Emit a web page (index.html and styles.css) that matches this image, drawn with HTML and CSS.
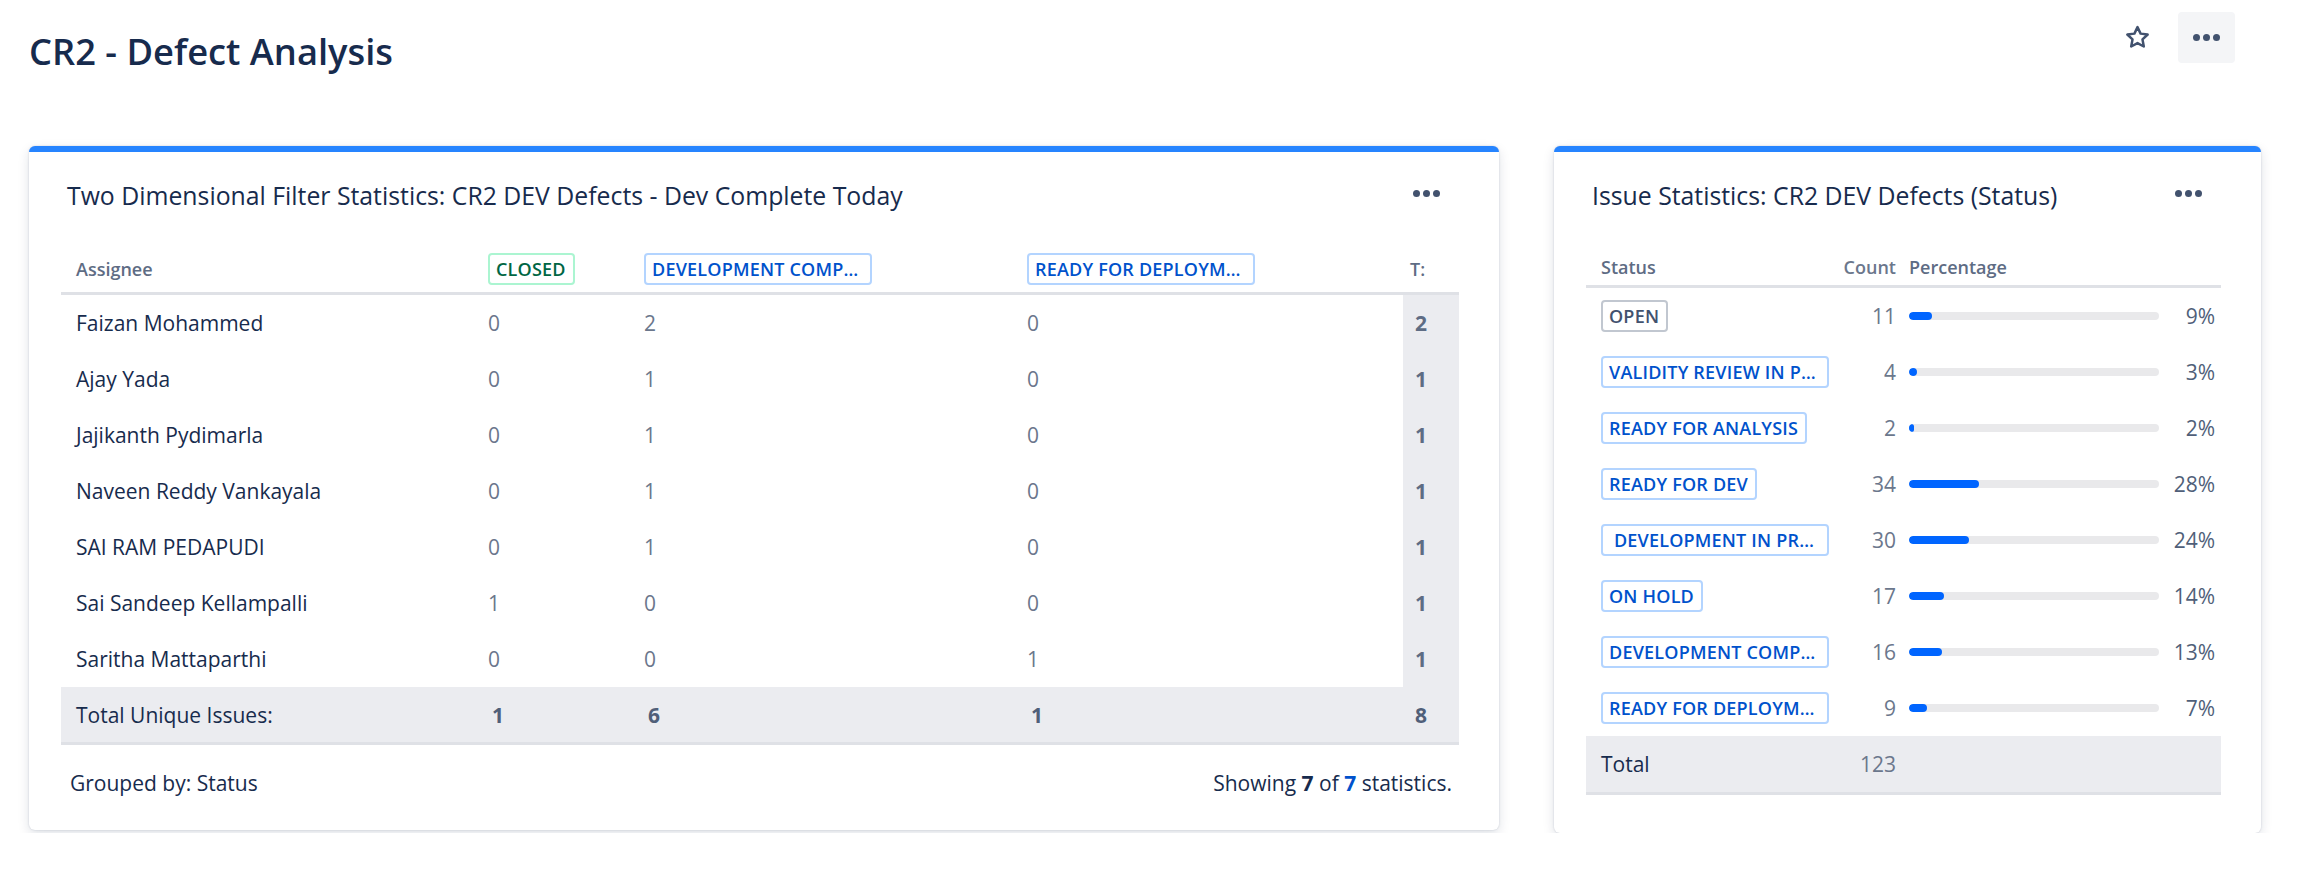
FILE: index.html
```html
<!DOCTYPE html>
<html lang="en">
<head>
<meta charset="utf-8">
<title>CR2 - Defect Analysis</title>
<link rel="stylesheet" href="styles.css">
</head>
<body>
<div class="page">
  <header class="page-header">
    <h1 class="page-title">CR2 - Defect Analysis</h1>
    <div class="page-actions">
      <button class="star-btn" aria-label="Star">
        <svg viewBox="0 0 24 24" width="27" height="27" aria-hidden="true">
          <path d="M12 2.8l2.75 5.75 6.3.8-4.62 4.38 1.18 6.27L12 16.95 6.39 20l1.18-6.27L2.95 9.35l6.3-.8z" fill="none" stroke="#42526e" stroke-width="2.2" stroke-linejoin="round"/>
        </svg>
      </button>
      <button class="more-btn" aria-label="More"><span class="dots"><i></i><i></i><i></i></span></button>
    </div>
  </header>

  <main class="dashboard">
    <section class="card card-wide">
      <div class="card-head">
        <h2 class="card-title">Two Dimensional Filter Statistics: CR2 DEV Defects - Dev Complete Today</h2>
        <span class="dots card-menu"><i></i><i></i><i></i></span>
      </div>
      <div class="card-body">
        <table class="stats stats-2d">
          <colgroup>
            <col class="c-name"><col class="c-closed"><col class="c-devc"><col class="c-ready"><col class="c-total">
          </colgroup>
          <thead>
            <tr>
              <th>Assignee</th>
              <th><span class="lozenge lz-green">CLOSED</span></th>
              <th><span class="lozenge lz-blue trunc">DEVELOPMENT COMP…</span></th>
              <th><span class="lozenge lz-blue trunc">READY FOR DEPLOYM…</span></th>
              <th class="tcol-head">T:</th>
            </tr>
          </thead>
          <tbody>
            <tr><td class="name">Faizan Mohammed</td><td class="num">0</td><td class="num">2</td><td class="num">0</td><td class="tcol">2</td></tr>
            <tr><td class="name">Ajay Yada</td><td class="num">0</td><td class="num">1</td><td class="num">0</td><td class="tcol">1</td></tr>
            <tr><td class="name">Jajikanth Pydimarla</td><td class="num">0</td><td class="num">1</td><td class="num">0</td><td class="tcol">1</td></tr>
            <tr><td class="name">Naveen Reddy Vankayala</td><td class="num">0</td><td class="num">1</td><td class="num">0</td><td class="tcol">1</td></tr>
            <tr><td class="name">SAI RAM PEDAPUDI</td><td class="num">0</td><td class="num">1</td><td class="num">0</td><td class="tcol">1</td></tr>
            <tr><td class="name">Sai Sandeep Kellampalli</td><td class="num">1</td><td class="num">0</td><td class="num">0</td><td class="tcol">1</td></tr>
            <tr><td class="name">Saritha Mattaparthi</td><td class="num">0</td><td class="num">0</td><td class="num">1</td><td class="tcol">1</td></tr>
          </tbody>
          <tfoot>
            <tr class="total-row">
              <td class="name">Total Unique Issues:</td>
              <td class="tnum">1</td><td class="tnum">6</td><td class="tnum">1</td><td class="tnum tlast">8</td>
            </tr>
          </tfoot>
        </table>
      </div>
      <div class="card-foot">
        <span>Grouped by: Status</span>
        <span>Showing <b>7</b> of <a class="link">7</a> statistics.</span>
      </div>
    </section>

    <section class="card card-narrow">
      <div class="card-head">
        <h2 class="card-title">Issue Statistics: CR2 DEV Defects (Status)</h2>
        <span class="dots card-menu"><i></i><i></i><i></i></span>
      </div>
      <div class="card-body card-body-end">
        <table class="stats stats-status">
          <colgroup>
            <col class="c-status"><col class="c-count"><col class="c-pct">
          </colgroup>
          <thead>
            <tr>
              <th>Status</th>
              <th class="count">Count</th>
              <th class="pct-head">Percentage</th>
            </tr>
          </thead>
          <tbody>
            <tr><td class="name"><span class="lozenge lz-grey">OPEN</span></td><td class="count">11</td><td class="pct"><div class="pct-cell"><div class="bar"><div class="bar-fill" style="width:9%"></div></div><span class="pct-val">9%</span></div></td></tr>
            <tr><td class="name"><span class="lozenge lz-blue trunc">VALIDITY REVIEW IN P…</span></td><td class="count">4</td><td class="pct"><div class="pct-cell"><div class="bar"><div class="bar-fill" style="width:3%"></div></div><span class="pct-val">3%</span></div></td></tr>
            <tr><td class="name"><span class="lozenge lz-blue">READY FOR ANALYSIS</span></td><td class="count">2</td><td class="pct"><div class="pct-cell"><div class="bar"><div class="bar-fill" style="width:2%"></div></div><span class="pct-val">2%</span></div></td></tr>
            <tr><td class="name"><span class="lozenge lz-blue">READY FOR DEV</span></td><td class="count">34</td><td class="pct"><div class="pct-cell"><div class="bar"><div class="bar-fill" style="width:28%"></div></div><span class="pct-val">28%</span></div></td></tr>
            <tr><td class="name"><span class="lozenge lz-blue trunc">&nbsp;DEVELOPMENT IN PR…</span></td><td class="count">30</td><td class="pct"><div class="pct-cell"><div class="bar"><div class="bar-fill" style="width:24%"></div></div><span class="pct-val">24%</span></div></td></tr>
            <tr><td class="name"><span class="lozenge lz-blue">ON HOLD</span></td><td class="count">17</td><td class="pct"><div class="pct-cell"><div class="bar"><div class="bar-fill" style="width:14%"></div></div><span class="pct-val">14%</span></div></td></tr>
            <tr><td class="name"><span class="lozenge lz-blue trunc">DEVELOPMENT COMP…</span></td><td class="count">16</td><td class="pct"><div class="pct-cell"><div class="bar"><div class="bar-fill" style="width:13%"></div></div><span class="pct-val">13%</span></div></td></tr>
            <tr><td class="name"><span class="lozenge lz-blue trunc">READY FOR DEPLOYM…</span></td><td class="count">9</td><td class="pct"><div class="pct-cell"><div class="bar"><div class="bar-fill" style="width:7%"></div></div><span class="pct-val">7%</span></div></td></tr>
          </tbody>
          <tfoot>
            <tr class="total-row">
              <td class="name">Total</td>
              <td class="count">123</td>
              <td class="pct"></td>
            </tr>
          </tfoot>
        </table>
      </div>
    </section>
  </main>
</div>
</body>
</html>
```
FILE: styles.css
```css
* { box-sizing: border-box; }

body {
  margin: 0;
  background: #ffffff;
  color: #172b4d;
  font-family: "Open Sans", "Noto Sans", sans-serif;
}

/* ---------- page header ---------- */
.page-header {
  display: flex;
  justify-content: space-between;
  align-items: flex-start;
  padding: 0 74px 0 29px;
}
.page-title {
  margin: 27px 0 0;
  font-size: 36.3px;
  line-height: 48px;
  font-weight: 600;
  color: #172b4d;
}
.page-actions {
  display: flex;
  align-items: center;
  gap: 27px;
  margin-top: 12px;
}
.star-btn {
  width: 27px;
  height: 27px;
  padding: 0;
  border: 0;
  background: none;
  display: flex;
}
.more-btn {
  width: 57px;
  height: 51px;
  padding: 0;
  border: 0;
  border-radius: 4px;
  background: #f4f5f7;
  display: flex;
  align-items: center;
  justify-content: center;
}
.dots { display: inline-flex; gap: 3px; align-items: center; }
.dots i {
  display: block;
  width: 7px;
  height: 7px;
  border-radius: 50%;
  background: #42526e;
}

/* ---------- dashboard ---------- */
.dashboard {
  display: grid;
  grid-template-columns: 1470px 707px;
  column-gap: 55px;
  align-items: start;
  margin-top: 71px;
  padding-left: 29px;
}
.card {
  background: #ffffff;
  border-top: 6px solid #2684ff;
  border-radius: 6px;
  box-shadow: 0 4px 12px rgba(9, 30, 66, 0.13), 0 0 2px rgba(9, 30, 66, 0.18);
}
.card-head {
  display: flex;
  justify-content: space-between;
  align-items: center;
  padding: 25px 59px 0 38px;
}
.card-title {
  margin: 0;
  font-size: 24.8px;
  line-height: 36px;
  font-weight: 500;
  color: #172b4d;
}
.card-menu { margin-top: -4px; }
.card-body { padding: 0 40px 0 32px; }
.card-body-end { padding-bottom: 38px; }

/* ---------- tables ---------- */
.stats {
  width: 100%;
  table-layout: fixed;
  border-collapse: separate;
  border-spacing: 0;
  font-size: 21px;
}
.stats th {
  text-align: left;
  font-size: 18px;
  font-weight: 600;
  color: #5e6c84;
  padding: 0 15px;
  border-bottom: 3px solid #dfe1e6;
  white-space: nowrap;
}
.stats td {
  padding: 12px 15px;
  line-height: 32px;
  white-space: nowrap;
}
.stats-2d { margin-top: 33px; }
.stats-2d th { padding-top: 7px; padding-bottom: 7px; line-height: 32px; }
.c-name { width: 412px; }
.c-closed { width: 156px; }
.c-devc { width: 383px; }
.c-ready { width: 391px; }
.c-total { width: 56px; }

.stats td.name { color: #172b4d; }
.stats td.num { color: #6b778c; }
.stats th.tcol-head { padding-left: 7px; padding-right: 0; }
.stats td.tcol {
  background: #ebecf0;
  color: #5e6c84;
  font-weight: 700;
  padding-left: 12px;
  padding-right: 0;
}
.total-row td {
  background: #ebecf0;
  border-bottom: 3px solid #dfe1e6;
}
.stats-2d .total-row td { padding-bottom: 11px; }
.total-row td.tnum {
  color: #505f79;
  font-weight: 700;
  padding-left: 19px;
}
.total-row td.tlast { padding-left: 12px; padding-right: 0; }

.stats-status { margin-top: 37px; }
.stats-status th { padding-top: 4px; padding-bottom: 4px; line-height: 27px; }
.c-status { width: 254px; }
.c-count { width: 64px; }
.c-pct { width: 317px; }
.stats .count {
  text-align: right;
  padding-left: 0;
  padding-right: 8px;
  color: #6b778c;
}
.stats th.pct-head { padding-left: 5px; }
.stats td.pct { padding-left: 5px; padding-right: 6px; }
.pct-cell {
  display: flex;
  align-items: center;
  justify-content: space-between;
  height: 32px;
}
.bar {
  width: 250px;
  height: 8px;
  border-radius: 4px;
  background: #e9e9eb;
  overflow: hidden;
}
.bar-fill {
  height: 100%;
  border-radius: 4px;
  background: #0065ff;
}
.pct-val { color: #505f79; }

/* ---------- lozenges ---------- */
.lozenge {
  display: inline-block;
  vertical-align: top;
  height: 32px;
  line-height: 28px;
  padding: 0 7px 0 6px;
  border: 2px solid;
  border-radius: 4px;
  font-size: 18px;
  font-weight: 600;
  letter-spacing: 0.2px;
  white-space: nowrap;
  text-transform: uppercase;
}
.lozenge.trunc { width: 228px; overflow: hidden; }
.lz-green { color: #006644; border-color: #abf5d1; }
.lz-blue { color: #0052cc; border-color: #b3d4ff; }
.lz-grey { color: #42526e; border-color: #c1c7d0; }

/* ---------- footer ---------- */
.card-foot {
  display: flex;
  justify-content: space-between;
  padding: 22px 47px 31px 41px;
  font-size: 21px;
  line-height: 32px;
  color: #172b4d;
}
.card-foot b { font-weight: 700; }
.link { color: #0052cc; font-weight: 700; }
```
